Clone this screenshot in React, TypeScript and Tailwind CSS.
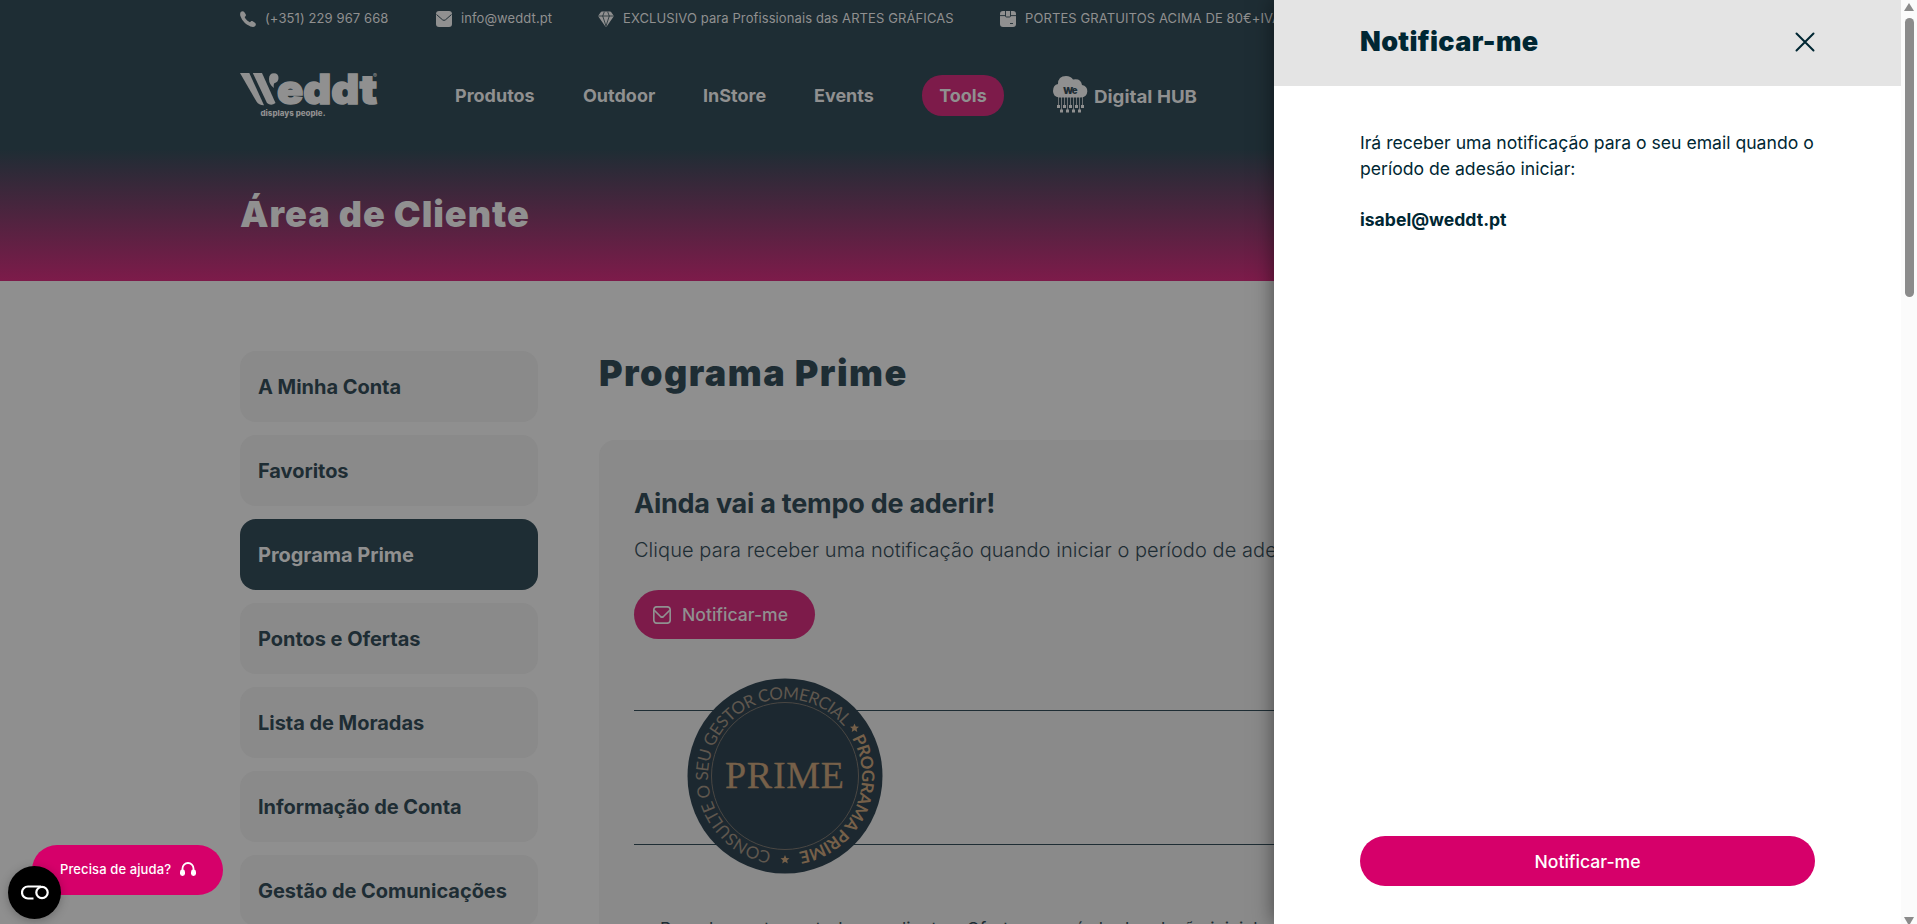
import React from "react";

const MENU = [
  "A Minha Conta",
  "Favoritos",
  "Programa Prime",
  "Pontos e Ofertas",
  "Lista de Moradas",
  "Informação de Conta",
  "Gestão de Comunicações",
];

const PhoneIcon = () => (
  <svg width="16" height="16" viewBox="0 0 16 16" fill="currentColor">
    <path d="M1 .8C2 0 3.500 0 4.200 1L5.700 3.300C6.100 4 6 4.700 5.500 5.200L4.700 6.100C5.200 7.800 8 10.700 9.900 11.300L10.800 10.500C11.300 10 12 9.900 12.700 10.300L15 11.800C16 12.500 16.200 14 15.200 15C14.200 16 12.700 16.200 10.500 15.400C6 13.800 2.200 10 .6 5.600C-.2 3.400 0 1.700 1 .8Z" />
  </svg>
);

const MailIcon = () => (
  <svg width="16" height="16" viewBox="0 0 16 16">
    <rect width="16" height="16" rx="3" fill="currentColor" />
    <path d="M.5 3.500L6.500 8.800Q8 10 9.500 8.800L15.500 3.500" fill="none" stroke="#1e2d34" strokeWidth="1" />
  </svg>
);

const GemIcon = () => (
  <svg width="16" height="16" viewBox="0 0 16 16">
    <path d="M4 .5H12Q12.800 .5 13.300 1.200L15.400 4.300Q15.900 5.200 15.300 6L9 15Q8 16.200 7 15L.7 6Q.1 5.200 .6 4.300L2.700 1.200Q3.200 .5 4 .5Z" fill="currentColor" />
    <path d="M.5 5H15.500M6.300 .8L4.700 5L8 15M9.700 .8L11.300 5L8 15" fill="none" stroke="#1e2d34" strokeWidth=".8" />
  </svg>
);

const BoxIcon = () => (
  <svg width="16" height="16" viewBox="0 0 16 16">
    <rect width="16" height="16" rx="3" fill="currentColor" />
    <path d="M0 4.600H5.500M10.500 4.600H16M5.500 0V5Q5.500 6 6.500 6H9.500Q10.500 6 10.500 5V0M10 12.500H13" fill="none" stroke="#1e2d34" strokeWidth=".9" />
  </svg>
);

const Logo = () => (
  <svg className="mb-px" width="140" height="50" viewBox="0 0 140 50" fill="#909090">
    <path d="M0 3H9.300L24 35.300Q19 35.500 16.500 31.500Z" />
    <path d="M12.800 3H22L35.500 33Q31 36.500 27 33Z" />
    <path d="M29 9Q29 3.300 34 3.300Q38.500 3.300 38.500 8Q38.500 12 34 13.500Q33.300 16 34 18Q29 14.500 29 9Z" />
    <text x="37" y="34.300" fontFamily="Inter, sans-serif" fontWeight="900" fontSize="41" textLength="100" lengthAdjust="spacingAndGlyphs" stroke="#909090" strokeWidth="1.600">
      eddt
    </text>
    <text x="133" y="8" fontFamily="Inter, sans-serif" fontSize="6">®</text>
    <text x="20.500" y="45.500" fontFamily="Inter, sans-serif" fontWeight="800" fontSize="8" textLength="65" lengthAdjust="spacingAndGlyphs">
      displays people.
    </text>
  </svg>
);

const DigitalHub = () => (
  <svg className="mb-[4px]" width="144" height="38" viewBox="0 0 144 38" fill="#909090">
    <path d="M6 22.500Q0 21.500 0 16Q0 10 5 9Q5 1 13 1Q18 1 20 4.500Q28 3 29 10Q34.500 11 34.300 16.500Q34 22 28 22.500Z" />
    <text x="10" y="18.500" fontFamily="Inter, sans-serif" fontWeight="900" fontSize="9.500" fill="#1e2d34" textLength="14.500">We</text>
    <g stroke="#909090" strokeWidth=".7">
      <path d="M5.500 22V31M8.500 22V35M11.500 22V31M14.500 22V35M17.500 22V31M20.500 22V35M23.500 22V31M26.500 22V35M29.500 22V31" />
    </g>
    {[5.500, 11.500, 17.500, 23.500, 29.500].map((x) => (
      <rect key={x} x={x - 1.500} y="30" width="3" height="3" />
    ))}
    {[8.500, 14.500, 20.500, 26.500].map((x) => (
      <rect key={x} x={x - 1.500} y="34.500" width="3" height="3" />
    ))}
    <text x="41" y="28" fontFamily="Inter, sans-serif" fontWeight="700" fontSize="18" textLength="103" lengthAdjust="spacingAndGlyphs">
      Digital HUB
    </text>
  </svg>
);

const STAR = "M0-4.500L1.300-1.500L4.500-1.300L2.100.7L2.800 4L0 2.200L-2.800 4L-2.100.7L-4.500-1.300L-1.300-1.500Z";

const PrimeBadge = () => (
  <svg className="mb-[4px]" width="196" height="196" viewBox="-98 -98 196 196">
    <defs>
      <path id="ring-bottom" d="M0 77A77 77 0 0 1 0-77A77 77 0 0 1 0 77" />
      <path id="ring-top" d="M0-77A77 77 0 0 1 0 77A77 77 0 0 1 0-77" />
    </defs>
    <circle r="97.500" fill="#1c2830" />
    <circle r="73.500" fill="none" stroke="#4a4743" strokeWidth="1" />
    <g fontFamily="Lato, sans-serif" fontSize="17">
      <text fill="#5f574e">
        <textPath href="#ring-bottom" startOffset="13.500" textLength="295">
          CONSULTE O SEU GESTOR COMERCIAL
        </textPath>
      </text>
      <text fill="#766049" fontWeight="700">
        <textPath href="#ring-top" startOffset="81" textLength="147">
          PROGRAMA PRIME
        </textPath>
      </text>
    </g>
    <path d={STAR} fill="#766049" transform="translate(69.500 -48)" />
    <path d={STAR} fill="#766049" transform="translate(0 83.500)" />
    <text x="-60" y="12" fill="#766049" fontFamily="'Liberation Serif', serif" fontSize="38" textLength="119" stroke="#766049" strokeWidth=".3">
      PRIME
    </text>
  </svg>
);

const Header: React.FC = () => (
  <header className="h-[281px] bg-[linear-gradient(180deg,#1e2d34_0px,#1e2d34_149px,#7d1b4a_281px)] pl-[240px] text-[#909090]">
    <div className="flex h-[37px] items-center text-[13px] tracking-[0.100px] whitespace-nowrap">
      <div className="flex w-[196px] items-center gap-[9px]"><PhoneIcon />(+351) 229 967 668</div>
      <div className="flex w-[162px] items-center gap-[9px]"><MailIcon />info@weddt.pt</div>
      <div className="flex w-[402px] items-center gap-[9px]"><GemIcon />EXCLUSIVO para Profissionais das ARTES GRÁFICAS</div>
      <div className="flex items-center gap-[9px]"><BoxIcon />PORTES GRATUITOS ACIMA DE 80€+IVA</div>
    </div>
    <div className="flex h-[117px] items-center text-[18px] font-bold">
      <div className="w-[215px]"><Logo /></div>
      <a className="w-[128px]">Produtos</a>
      <a className="w-[120px]">Outdoor</a>
      <a className="w-[111px]">InStore</a>
      <a className="w-[108px]">Events</a>
      <a className="mr-[49px] flex h-[41px] w-[82px] items-center justify-center rounded-[20px] bg-[#7d1b4a]">Tools</a>
      <DigitalHub />
    </div>
    <h1 className="pt-[36px] text-[36px] leading-[48px] font-black tracking-[0.950px]">Área de Cliente</h1>
  </header>
);

const Sidebar: React.FC = () => (
  <nav className="flex w-[298px] shrink-0 flex-col gap-[13px]">
    {MENU.map((item) => (
      <a
        key={item}
        className={`flex h-[71px] shrink-0 items-center rounded-2xl pl-[18px] text-[20px] font-bold tracking-[-0.040px] ${
          item === "Programa Prime" ? "bg-[#1e2d34] text-[#909090]" : "bg-[#8a8a8a]"
        }`}
      >
        {item}
      </a>
    ))}
  </nav>
);

const Content: React.FC = () => (
  <main className="w-[1078px] shrink-0">
    <h2 className="text-[36px] leading-[44px] font-black tracking-[1.450px]">Programa Prime</h2>
    <section className="mt-[45px] h-[520px] rounded-2xl bg-[#8a8a8a] px-[35px] pt-[45px]">
      <h3 className="text-[27px] leading-[38px] font-bold tracking-[-0.250px]">Ainda vai a tempo de aderir!</h3>
      <p className="mt-[12px] text-[20px] leading-[30px] font-light tracking-[0.060px]">
        Clique para receber uma notificação quando iniciar o período de adesão.
      </p>
      <button className="mt-[25px] flex h-[49px] w-[181px] items-center gap-[11px] rounded-full bg-[#7d1b4a] pl-[19px] text-[17.600px] font-medium text-[#909090]">
        <svg width="18" height="18" viewBox="0 0 18 18" fill="none" stroke="currentColor" strokeWidth="1.700">
          <rect x=".8" y=".8" width="16.400" height="16.400" rx="3" />
          <path d="M1 4L7.500 10.500Q9 11.800 10.500 10.500L17 4" />
        </svg>
        <span className="pt-px">Notificar-me</span>
      </button>
      <div className="mt-[71px] flex h-[135px] items-center border-y border-[#1e2d34] pl-[53px]">
        <PrimeBadge />
      </div>
      <p className="mt-[71px] pl-[26px] text-[17.600px] leading-[26px]">
        Para desconto em todos os clientes. Oferta no período de adesão inicial
      </p>
    </section>
  </main>
);

const Drawer: React.FC = () => (
  <aside className="absolute top-0 left-[1274px] flex h-[924px] w-[627px] flex-col bg-white text-[#002733] shadow-[0_0_20px_rgba(0,0,0,0.5)]">
    <div className="flex h-[86px] items-center justify-between bg-[#e4e4e4] px-[86px] pb-[2px]">
      <h2 className="text-[27px] font-black tracking-[0.350px]">Notificar-me</h2>
      <svg width="20" height="20" viewBox="0 0 20 20" stroke="currentColor" strokeWidth="2" strokeLinecap="round">
        <path d="M1.500 1.500L18.500 18.500M18.500 1.500L1.500 18.500" />
      </svg>
    </div>
    <div className="flex-1 px-[86px] pt-[44px] text-[17.600px] leading-[26px]">
      <p className="whitespace-nowrap">
        Irá receber uma notificação para o seu email quando o
        <br />
        período de adesão iniciar:
      </p>
      <p className="mt-[25px] font-bold">isabel@weddt.pt</p>
    </div>
    <button className="mb-[38px] ml-[86px] h-[50px] w-[455px] shrink-0 rounded-full bg-[#d6006a] pt-[2px] text-[17.600px] font-medium text-white">
      Notificar-me
    </button>
  </aside>
);

const Scrollbar = () => (
  <div className="absolute top-0 right-0 flex h-[924px] w-4 flex-col items-center bg-[#fbfbfb]">
    <svg width="10" height="18" viewBox="0 0 10 18" fill="#8b8b8b"><path d="M5 3L10 11H0Z" /></svg>
    <div className="h-[279px] w-[9px] rounded-full bg-[#8b8b8b]" />
    <svg className="mt-auto" width="10" height="7" viewBox="0 0 10 7" fill="#8b8b8b"><path d="M0 0H10L6 7H4Z" /></svg>
  </div>
);

const HelpWidgets = () => (
  <>
    <button className="absolute top-[845px] left-[32px] flex h-[50px] w-[191px] items-center gap-[9px] rounded-full bg-[#d6006a] pl-[28px] text-[13px] font-medium tracking-[0.110px] whitespace-nowrap text-white">
      Precisa de ajuda?
      <svg className="mb-[2px]" width="16" height="15" viewBox="0 0 16 15">
        <path d="M2.500 9V6.500A5.500 5.500 0 0 1 13.500 6.500V9" fill="none" stroke="#fff" strokeWidth="1.800" />
        <rect y="7.500" width="5" height="6.500" rx="2.400" fill="#fff" />
        <rect x="11" y="7.500" width="5" height="6.500" rx="2.400" fill="#fff" />
      </svg>
    </button>
    <button className="absolute top-[866px] left-[8px] flex h-[53px] w-[53px] items-center justify-center rounded-full bg-black shadow-[0_2px_10px_rgba(0,0,0,0.25)]">
      <svg width="28" height="15" viewBox="0 0 28 15" fill="none" stroke="#fff" strokeWidth="2.200">
        <circle cx="21" cy="7.500" r="5.700" />
        <path d="M20 1.500H7A6 6 0 0 0 7 13.500H12.500" />
      </svg>
    </button>
  </>
);

export default function App() {
  return (
    <div className="relative h-[924px] w-[1917px] overflow-hidden bg-[#8f8f8f] font-[Inter,sans-serif] text-[#1e2d34]">
      <Header />
      <div className="flex items-start gap-[61px] pt-[70px] pl-[240px]">
        <Sidebar />
        <Content />
      </div>
      <Drawer />
      <Scrollbar />
      <HelpWidgets />
    </div>
  );
}
